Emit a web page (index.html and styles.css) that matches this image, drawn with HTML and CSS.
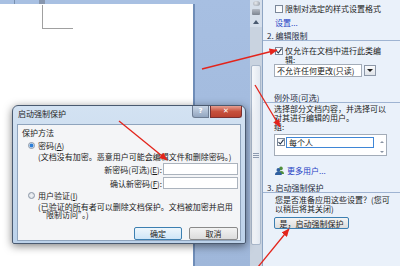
FILE: index.html
```html
<!DOCTYPE html>
<html>
<head>
<meta charset="utf-8">
<link rel="stylesheet" href="styles.css">
</head>
<body>
<div class="app">
  <div class="docarea">
    <div class="page">
      <div class="ruler"><span class="tick"></span><span class="marker"></span></div>
      <div class="crop"></div>
    </div>
  </div>
  <div class="vscroll">
    <span class="ic ic1"></span>
    <span class="ic ic2"></span>
    <span class="vs-up"></span>
    <div class="vs-track"><div class="vs-thumb"><span class="grip"></span></div></div>
  </div>
  <div class="pane">
    <div class="chkline"><span class="cbox"></span><span>限制对选定的样式设置格式</span></div>
    <a class="link setlink">设置...</a>
    <div class="sect">2. 编辑限制</div>
    <div class="chkline two"><span class="cbox"><svg class="tick-svg" width="6" height="6" viewBox="0 0 6 6"><path d="M0.5 3 L2.3 5 L5.6 0.6" fill="none" stroke="#1e2e45" stroke-width="1.1"/></svg></span><span>仅允许在文档中进行此类编<br>辑:</span></div>
    <div class="combo"><span class="combo-box">不允许任何更改(只读)</span><span class="combo-btn"><span class="down"></span></span></div>
    <div class="sub">例外项(可选)</div>
    <div class="txt">选择部分文档内容，并选择可以<br>对其进行编辑的用户。</div>
    <div class="txt">组:</div>
    <div class="list">
      <span class="cbox"><svg class="tick-svg" width="6" height="6" viewBox="0 0 6 6"><path d="M0.5 3 L2.3 5 L5.6 0.6" fill="none" stroke="#1e2e45" stroke-width="1.1"/></svg></span>
      <span class="sel">每个人</span>
      <span class="list-scroll"><span class="sup"></span><span class="sdown"></span></span>
    </div>
    <div class="more">
      <svg width="9" height="9" viewBox="0 0 9 9"><circle cx="6" cy="2.4" r="1.8" fill="#4f8f3a"/><path d="M3.2 8 a2.9 2.9 0 0 1 5.8 0z" fill="#4f8f3a"/><circle cx="3.4" cy="4" r="1.9" fill="#2f5f9f"/><path d="M0 9 a3.4 3.2 0 0 1 6.8 0z" fill="#2f5f9f"/></svg>
      <a class="link">更多用户...</a>
    </div>
    <div class="sect">3. 启动强制保护</div>
    <div class="txt ask">您是否准备应用这些设置？(您可<br>以稍后将其关闭)</div>
    <button class="pbtn">是，启动强制保护</button>
  </div>
</div>

<div class="dialog">
  <div class="dlg-title">
    <span class="dlg-caption">启动强制保护</span>
    <span class="btn-help">?</span>
    <span class="btn-close">✕</span>
  </div>
  <div class="dlg-client">
    <div class="grp">保护方法</div>
    <div class="opt"><span class="radio on"></span><span>密码(<u>A</u>)</span></div>
    <div class="note">(文档没有加密。恶意用户可能会编辑文件和删除密码。)</div>
    <div class="field"><span class="flabel">新密码(可选)(<u>E</u>):</span><span class="input"></span></div>
    <div class="field"><span class="flabel">确认新密码(<u>F</u>):</span><span class="input"></span></div>
    <div class="opt"><span class="radio"></span><span>用户验证(<u>I</u>)</span></div>
    <div class="note">(已验证的所有者可以删除文档保护。文档被加密并启用<br>“限制访问”。)</div>
    <div class="actions"><button class="btn default">确定</button><button class="btn">取消</button></div>
  </div>
</div>

<svg class="arrows" width="400" height="266" viewBox="0 0 400 266">
  <defs>
    <marker id="ah" markerUnits="userSpaceOnUse" markerWidth="8" markerHeight="7" refX="7.5" refY="3.5" orient="auto">
      <path d="M0,0 L8,3.5 L0,7 z" fill="#e3241b"/>
    </marker>
  </defs>
  <g stroke="#e3241b" stroke-width="1.3" fill="none" marker-end="url(#ah)">
    <line x1="202" y1="69" x2="277" y2="50"/>
    <line x1="255" y1="85" x2="280" y2="127"/>
    <line x1="119" y1="121" x2="167" y2="160"/>
    <line x1="258" y1="267" x2="289" y2="229"/>
  </g>
</svg>
</body>
</html>
```

FILE: styles.css
```css
html, body {
  margin: 0;
  padding: 0;
}
body {
  width: 400px;
  height: 266px;
  overflow: hidden;
  position: relative;
  font-family: "Noto Sans CJK SC", "Noto Sans", sans-serif;
  font-size: 8px;
  line-height: 9px;
  color: #1b1b1b;
}
.app {
  display: flex;
  height: 266px;
}
.docarea {
  width: 250px;
  flex: none;
  background: linear-gradient(#a7bfe2, #9fb7da);
}
.page {
  width: 193px;
  height: 100%;
  background: #fff;
  box-shadow: 2px 0 0 #6f8db8;
}
.ruler {
  height: 4px;
  width: 195px;
  background: #a8c0e2;
  display: flex;
}
.ruler .tick {
  margin-left: 14px;
  width: 1px;
  background: #7890b0;
}
.ruler .marker {
  margin-left: 24px;
  width: 6px;
  background: #8796ae;
}
.crop {
  margin: 1px 0 0 42px;
  width: 30px;
  height: 23px;
  border-left: 1px solid #a0a0a0;
  border-bottom: 1px solid #a0a0a0;
}

/* vertical scrollbar */
.vscroll {
  width: 12px;
  flex: none;
  background: #d6dfeb;
  border-right: 1px solid #8ea5c3;
  display: flex;
  flex-direction: column;
  align-items: center;
}
.ic1 {
  margin-top: 1px;
  width: 7px;
  height: 5px;
  border-radius: 50%;
  background: radial-gradient(circle at 40% 40%, #e8eaee, #8b939f);
}
.ic2 {
  margin-top: 3px;
  width: 8px;
  height: 6px;
  border-radius: 1px;
  background: linear-gradient(#b4bac4, #7d8591);
}
.vs-up {
  margin-top: 5px;
  width: 0;
  height: 0;
  border-left: 3px solid transparent;
  border-right: 3px solid transparent;
  border-bottom: 4px solid #4a5a70;
}
.vs-track {
  margin-top: 3px;
  flex: 1;
  align-self: stretch;
  background: #c9d3e0;
  padding-top: 38px;
}
.vs-thumb {
  height: 180px;
  margin: 0 1px;
  box-sizing: border-box;
  border: 1px solid #a9b7ca;
  border-radius: 2px;
  background: linear-gradient(90deg, #f6f8fb, #e2e8f0);
  display: flex;
  align-items: center;
  justify-content: center;
}
.grip {
  width: 6px;
  height: 5px;
  background: repeating-linear-gradient(#8e9bb0 0 1px, transparent 1px 2px);
}

/* task pane */
.pane {
  flex: 1;
  background: #eaf1fa;
  padding-top: 4px;
  display: flex;
  flex-direction: column;
  align-items: flex-start;
  white-space: nowrap;
}
.chkline {
  display: flex;
  align-items: flex-start;
  gap: 2px;
  padding-left: 12px;
}
.chkline.two {
  margin-top: 5px;
}
.cbox {
  flex: none;
  width: 6px;
  height: 6px;
  margin-top: 1px;
  border: 1px solid #7a8799;
  background: linear-gradient(#f4f6f8, #ffffff);
  display: flex;
}
.tick-svg {
  display: block;
}
.link {
  color: #1f3fc4;
}
.setlink {
  margin-top: 5px;
  padding-left: 12px;
}
.sect {
  align-self: stretch;
  margin-top: 4px;
  padding-left: 4px;
  border-bottom: 1px solid #9fb4d2;
  color: #1d2a3c;
}
.combo {
  display: flex;
  padding-left: 11px;
}
.combo-box {
  width: 88px;
  height: 13px;
  box-sizing: border-box;
  border: 1px solid #a3acb8;
  background: #fff;
  padding-left: 2px;
  line-height: 11px;
}
.combo-btn {
  margin-left: 2px;
  margin-top: 1px;
  width: 12px;
  height: 11px;
  box-sizing: border-box;
  border: 1px solid #8d98a8;
  background: linear-gradient(#fafbfc, #dfe3e8);
  display: flex;
  align-items: center;
  justify-content: center;
}
.down {
  width: 0;
  height: 0;
  border-left: 3px solid transparent;
  border-right: 3px solid transparent;
  border-top: 3px solid #1b1b1b;
}
.sub {
  align-self: stretch;
  margin-top: 16px;
  padding-left: 11px;
  border-bottom: 1px solid #9fb4d2;
  color: #1d2a3c;
}
.txt {
  padding-left: 11px;
}
.sub + .txt {
  margin-top: 1px;
}
.list {
  margin: 3px 0 0 11px;
  width: 113px;
  height: 22px;
  box-sizing: border-box;
  border: 1px solid #a3acb8;
  background: #fff;
  display: flex;
  align-items: flex-start;
  padding: 2px 0 0 2px;
}
.list .cbox {
  margin-top: 1px;
}
.sel {
  margin-left: 1px;
  width: 88px;
  height: 11px;
  box-sizing: border-box;
  border: 1px solid #3f86d6;
  padding-left: 2px;
  line-height: 9px;
  color: #111;
}
.list-scroll {
  margin-left: auto;
  width: 9px;
  display: flex;
  flex-direction: column;
  align-items: center;
}
.sup {
  margin-top: 4px;
  width: 0;
  height: 0;
  border-left: 2px solid transparent;
  border-right: 2px solid transparent;
  border-bottom: 2px solid #8a94a3;
}
.sdown {
  margin-top: 8px;
  width: 0;
  height: 0;
  border-left: 2px solid transparent;
  border-right: 2px solid transparent;
  border-top: 2px solid #8a94a3;
}
.more {
  margin-top: 10px;
  padding-left: 12px;
  display: flex;
  align-items: center;
  gap: 3px;
}
.more svg {
  display: block;
}
.more + .sect {
  margin-top: 8px;
}
.ask {
  margin-top: 2px;
  padding-left: 12px;
}
.pbtn {
  margin: 4px 0 0 11px;
  width: 75px;
  height: 12px;
  padding: 0;
  box-sizing: border-box;
  border: 1px solid #3c7fb1;
  border-radius: 2px;
  background: linear-gradient(#f4f4f4, #dcdcdc);
  font: inherit;
  line-height: 9px;
  color: #1b1b1b;
}

/* dialog window */
.dialog {
  position: absolute;
  left: 12px;
  top: 105px;
  width: 234px;
  box-sizing: border-box;
  border: 1px solid #4a5a70;
  border-radius: 6px 6px 2px 2px;
  background: linear-gradient(#d3e2f2, #bcd2ea);
  padding: 0 4px 2px;
  box-shadow: 0 2px 9px rgba(0, 0, 0, 0.5);
}
.dlg-title {
  height: 18px;
  display: flex;
  align-items: flex-start;
}
.dlg-caption {
  padding-left: 1px;
  line-height: 16px;
  color: #1e1e1e;
  margin-right: auto;
}
.btn-help {
  width: 17px;
  height: 12px;
  box-sizing: border-box;
  border: 1px solid #6d7c92;
  border-top: none;
  border-radius: 0 0 0 3px;
  background: linear-gradient(#c9d6e6, #93a6c0);
  color: #fff;
  font-family: "DejaVu Sans", sans-serif;
  font-weight: bold;
  font-size: 7px;
  line-height: 11px;
  text-align: center;
}
.btn-close {
  margin-left: 1px;
  margin-right: -1px;
  width: 32px;
  height: 12px;
  box-sizing: border-box;
  border: 1px solid #7a3030;
  border-top: none;
  border-radius: 0 0 3px 0;
  background: linear-gradient(#e6a092, #c7503c 50%, #b9412f);
  color: #fff;
  font-family: "DejaVu Sans", sans-serif;
  font-weight: bold;
  font-size: 7px;
  line-height: 11px;
  text-align: center;
}
.dlg-client {
  height: 117px;
  box-sizing: border-box;
  border: 1px solid #8fa4bd;
  background: #f4f5f7;
  padding: 3px 2px 0 4px;
  display: flex;
  flex-direction: column;
  white-space: nowrap;
}
.grp {
  color: #1b1b1b;
}
.opt {
  margin-top: 4px;
  padding-left: 6px;
  display: flex;
  align-items: center;
  gap: 3px;
}
.opt + .note {
  margin-top: 3px;
}
.radio {
  width: 7px;
  height: 7px;
  box-sizing: border-box;
  border-radius: 50%;
  border: 1px solid #8a96a6;
  background: radial-gradient(circle, #f0f2f5, #d6dbe2);
}
.radio.on {
  background: radial-gradient(circle, #2e7fd8 0 1.6px, #cfe2f5 2.2px, #eef2f7);
}
.note {
  padding-left: 16px;
  line-height: 8px;
}
.field {
  margin-top: 2px;
  display: flex;
  height: 12px;
  align-items: center;
}
.flabel {
  width: 140px;
  text-align: right;
  padding-right: 1px;
}
.input {
  width: 75px;
  height: 12px;
  box-sizing: border-box;
  border: 1px solid #abb3bd;
  background: #fff;
}
.field + .opt {
  margin-top: 2px;
}
.opt + .note + .actions {
  margin-top: 8px;
}
.actions {
  display: flex;
  justify-content: flex-end;
  gap: 7px;
  margin-top: 8px;
}
.btn {
  width: 49px;
  height: 13px;
  padding: 0;
  box-sizing: border-box;
  border: 1px solid #8a8a8a;
  border-radius: 2px;
  background: linear-gradient(#f3f3f3, #dcdcdc);
  font: inherit;
  line-height: 10px;
  color: #1b1b1b;
}
.btn.default {
  width: 48px;
  border-color: #3c7fb1;
  background: linear-gradient(#eef6fc, #cfe6f7);
}

.arrows {
  position: absolute;
  left: 0;
  top: 0;
  pointer-events: none;
}
```
